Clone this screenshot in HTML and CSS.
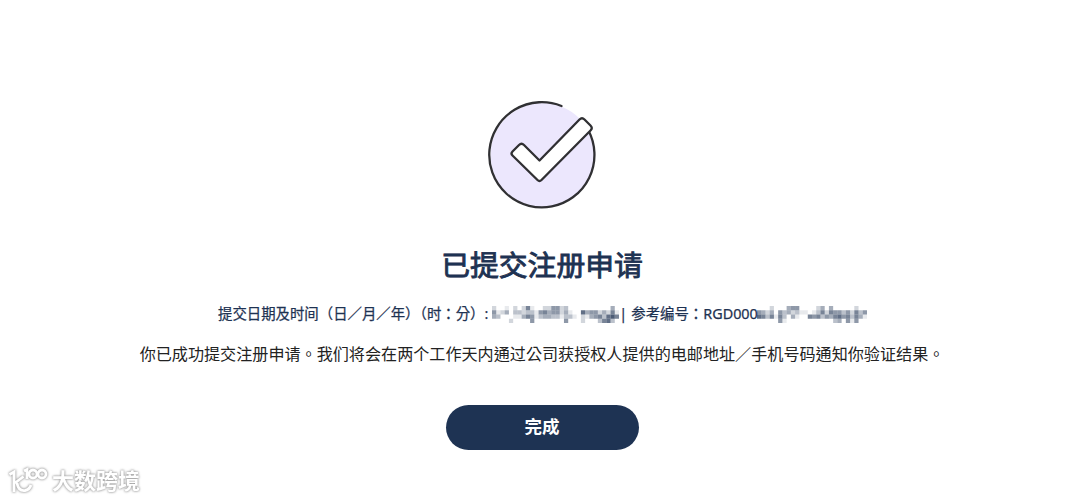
FILE: index.html
```html
<!DOCTYPE html>
<html lang="zh-Hant">
<head>
<meta charset="utf-8">
<title>已提交注册申请</title>
<link rel="stylesheet" href="styles.css">
</head>
<body>
<main class="result">
  <svg class="result-icon" viewBox="0 0 110 110" aria-hidden="true">
    <circle class="disc" cx="55.500" cy="56" r="52"/>
    <path class="line" d="M74.500 7A52.600 52.600 0 1 0 101.500 31.500"/>
    <path class="tick" d="M25.500 52.500L32 46Q34.500 43.500 37 46L52.500 61.500L92.500 20.500Q95 18 97.500 20.500L103.500 26.500Q106 29 103.500 31.500L54.500 81Q52.500 83 50.500 81L25.500 56.500Q23.500 54.500 25.500 52.500Z"/>
  </svg>
  <h1 class="title">已提交注册申请</h1>
  <p class="meta"><span class="label">提交日期及时间（日／月／年）</span><span class="label-time">（时：分）:</span>
    <svg class="mask mask-date" viewBox="0 0 30 4" preserveAspectRatio="none" aria-hidden="true"></svg>
    <span class="bar">|</span><span class="label-ref">参考编号：</span><span class="ref">RGD000</span>
    <svg class="mask mask-ref" viewBox="0 0 26 4" preserveAspectRatio="none" aria-hidden="true"></svg>
  </p>
  <p class="message">你已成功提交注册申请。我们将会在两个工作天内通过公司获授权人提供的电邮地址／手机号码通知你验证结果。</p>
  <button class="done" type="button" lang="zh-Hans">完成</button>
</main>
<div class="watermark" lang="zh-Hans">
  <svg class="watermark-logo" viewBox="0 0 40 28" aria-hidden="true">
    <path d="M1.500 7.500L6 5V25M15.500 9.500L7 16M9 16C10 22 13 24 17 23.500C20 23 22 21 23 18M16 4L19 2.500V12"/><circle cx="25" cy="7" r="4"/><circle cx="34" cy="7" r="4"/>
  </svg>
  <span>大数跨境</span>
</div>
<script src="mask.js"></script>
</body>
</html>
```
FILE: styles.css
```css
body { margin: 0; background: #fff; font-family: "Noto Sans", "Noto Sans CJK TC", sans-serif; color: #1e3252; }
.result { display: flex; flex-direction: column; align-items: center; box-sizing: border-box; width: 1080px; height: 500px; padding: 99px 0 0 4px; }
.result-icon { width: 110px; height: 110px; }
.disc { fill: #ece7fd; }
.line { fill: none; stroke: #303033; stroke-width: 2.3; stroke-linecap: round; }
.tick { fill: #fff; stroke: #303033; stroke-width: 2.3; stroke-linejoin: round; }
.title { margin: 35px 0 0; font: 400 28.8px/40px "Noto Sans CJK TC", sans-serif; -webkit-text-stroke: 0.9px; }
.meta { display: flex; align-items: center; align-self: flex-start; margin: 20px 0 0 214px; height: 20px; font-size: 14.4px; line-height: 20px; white-space: nowrap; -webkit-text-stroke: 0.25px; }
.label-time { margin-left: -7px; }
.mask { flex: none; width: 127px; height: 17px; margin-left: 4px; fill: #1e3252; }
.mask-ref { width: 110px; margin-left: -1px; }
.bar { margin-left: 0; }
.label-ref { margin-left: 4px; }
.message { margin: 17px 0 0; color: #222; font: 400 16.1px/24px "Noto Sans CJK TC", sans-serif; white-space: nowrap; }
.done { width: 193px; height: 45px; margin: 40px 0 0; padding: 0 0 4px; border: 0; border-radius: 23px; background: #1e3353; color: #fff; font: 700 17.5px/41px "Noto Sans CJK SC", sans-serif; }
.watermark { position: absolute; left: 8px; bottom: 4px; display: flex; align-items: center; gap: 4px; color: #fff; font: 700 22px/28px "Noto Sans CJK SC", sans-serif; filter: drop-shadow(0 0 1px #999) drop-shadow(0 0 1px #ccc); }
.watermark span { margin-bottom: 3px; }
.watermark-logo { width: 40px; height: 28px; fill: none; stroke: #fff; stroke-width: 2.8; }
```
FILE: mask.js
```js
// Each digit is the strength of one pixelated cell, in tenths.
var masks = {
  ".mask-date": [
    "200102026100225523000000000040",
    "512403323315645524100745524261",
    "430001146513443313310214563786",
    "000020000500000005000200036730"
  ],
  ".mask-ref": [
    "00020004550000240400000200",
    "54240534231101362655352635",
    "76361630410065635467563641",
    "00000510000000000034051500"
  ]
};

Object.keys(masks).forEach(function (selector) {
  var svg = document.querySelector(selector);
  masks[selector].forEach(function (row, y) {
    row.split("").forEach(function (level, x) {
      if (level === "0") return;
      var cell = document.createElementNS("http://www.w3.org/2000/svg", "rect");
      cell.setAttribute("x", x);
      cell.setAttribute("y", y);
      cell.setAttribute("width", 1);
      cell.setAttribute("height", 1);
      cell.setAttribute("opacity", level / 10);
      svg.appendChild(cell);
    });
  });
});
```
